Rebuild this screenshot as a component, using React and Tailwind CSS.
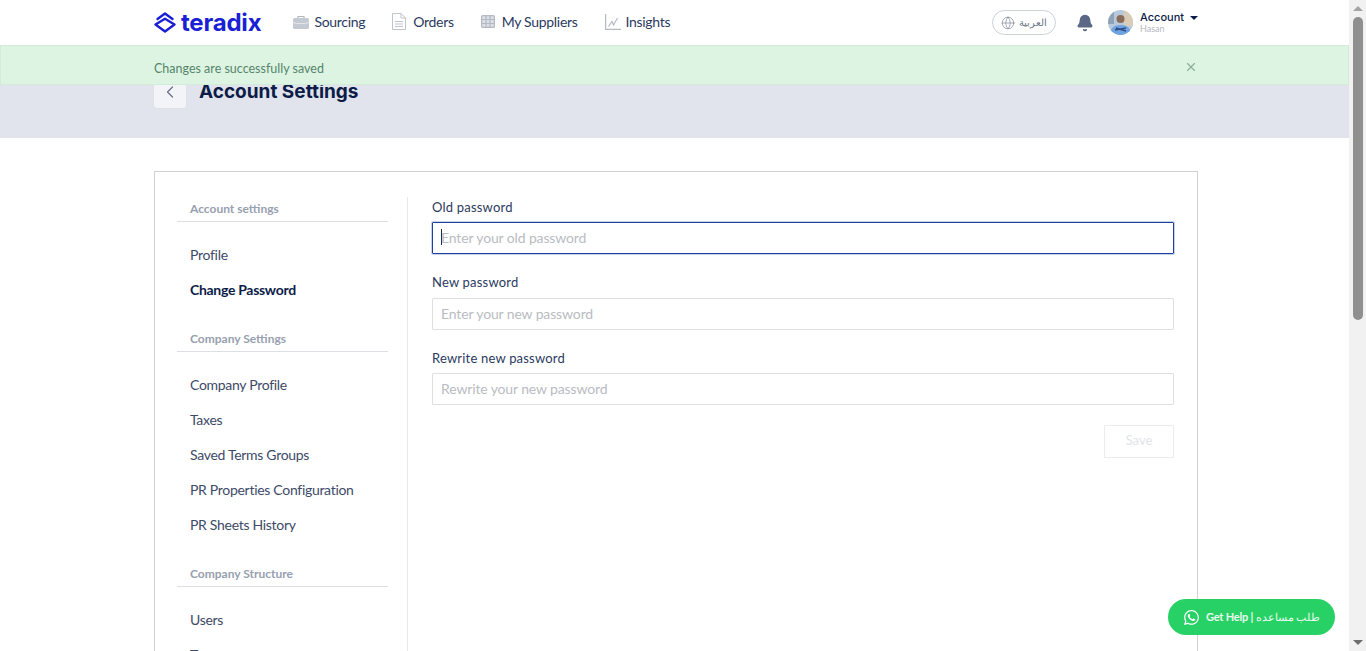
import { ChevronLeft, X, Globe, Bell } from 'lucide-react'
import { FaWhatsapp } from 'react-icons/fa'

const font = 'font-["Lato","Noto_Sans",sans-serif]'
const headFont = 'font-["Inter",sans-serif]'

function Logo() {
  return (
    <svg width="22" height="21" viewBox="0 0 22 21" fill="none" stroke="#1a1fd6" strokeWidth="2.400" strokeLinejoin="round" strokeLinecap="round">
      <path d="M3.500 7 L11 1.500 L18.500 7" />
      <path d="M1.500 12.500 L11 6.800 L20.500 12.500 L11 19.500 Z" />
    </svg>
  )
}

function BriefcaseIcon() {
  return (
    <svg width="16" height="14" viewBox="0 0 16 14">
      <path d="M5 3V1.500h6V3" fill="none" stroke="#b4b9c4" strokeWidth="1.200" />
      <rect x="0" y="3" width="16" height="11" rx="1.500" fill="#c5c9d2" />
      <path d="M0 7.500c4 1.600 12 1.600 16 0" fill="none" stroke="#e6e8ec" strokeWidth="1" />
    </svg>
  )
}

function DocIcon() {
  return (
    <svg width="14" height="17" viewBox="0 0 14 17" fill="none" stroke="#bfc3cd" strokeWidth="1">
      <path d="M.5.500h8.500l4.500 4.500v11.500h-13z" />
      <path d="M9 .500v4.500h4.500M3 8.500h8M3 11h8M3 13.500h8" />
    </svg>
  )
}

function GridIcon() {
  return (
    <svg width="14" height="13" viewBox="0 0 14 13" fill="none" stroke="#b4b9c4" strokeWidth="1.200">
      <rect x=".6" y=".6" width="12.800" height="11.800" rx="1" fill="#dcdfe5" />
      <path d="M.6 4.500h12.800M.6 8.500h12.800M5 .6v11.800M9 .6v11.800" />
    </svg>
  )
}

function ChartIcon() {
  return (
    <svg width="16" height="16" viewBox="0 0 16 16" fill="none" stroke="#b4b9c4" strokeWidth="1.200">
      <path d="M.6 0v15.400H16" />
      <path d="M3.500 12.500l3.500-5 1.500 3.500L12.500 4" />
    </svg>
  )
}

function Avatar() {
  return (
    <svg width="25" height="25" viewBox="0 0 25 25" className="rounded-full">
      <rect width="25" height="25" fill="#b9c9dc" />
      <rect x="16" width="9" height="16" fill="#d9cdb8" />
      <rect width="6" height="14" fill="#8fa3b8" />
      <path d="M2 25c0-7 4-10 10.500-10S23 18 23 25z" fill="#6fa3e0" />
      <circle cx="12.500" cy="9" r="4" fill="#8a6a58" />
      <path d="M7 20l11-2M8 18l10 3" stroke="#2f4f86" strokeWidth="1.500" />
    </svg>
  )
}

function NavItem({ icon, label, gap }) {
  return (
    <div className={`flex items-center ${gap} text-[14px] tracking-[-0.3px] text-[#2b3a5e]`}>
      {icon}
      <span>{label}</span>
    </div>
  )
}

function SideHeading({ children }) {
  return (
    <div className="ml-[-13px] w-[211px] border-b border-[#dcdfe3] pb-[4px] pl-[13px] text-[12px] leading-[16px] font-bold text-[#97a0af]">
      {children}
    </div>
  )
}

function SideLink({ children, active }) {
  return (
    <div className={`h-[35px] text-[14px] leading-[20px] tracking-[-0.3px] ${active ? 'font-bold text-[#0c1c48]' : 'text-[#3d4a68]'}`}>
      {children}
    </div>
  )
}

function Field({ label, placeholder, focused, mb, labelMb }) {
  return (
    <div className={mb}>
      <div className={`${labelMb} text-[13px] leading-[16px] tracking-[0.2px] text-[#2b3a5e]`}>{label}</div>
      <div className={`flex h-[32px] items-center rounded-[1px] border px-[8px] pb-[2px] text-[14px] tracking-[-0.13px] text-[#b9bcc3] ${focused ? 'border-[#1d3f9e] shadow-[0_0_0_1px_#c6d2ee]' : 'border-[#dee0e4]'}`}>
        {focused && <span className="mr-[-1px] h-[16px] w-px bg-[#1b2a4a]" />}
        {placeholder}
      </div>
    </div>
  )
}

export default function App() {
  return (
    <div className={`relative flex h-[651px] overflow-hidden bg-white ${font}`}>
      <div className="relative min-w-0 flex-1">
        <header className="flex h-[45px] items-center pr-[151px] pl-[154px]">
          <div className={`flex items-center gap-[5px] ${headFont}`}>
            <Logo />
            <span className="text-[24px] leading-none font-bold tracking-[-0.2px] text-[#1a1fd6]">teradix</span>
          </div>
          <div className="mb-[2px] ml-[32px] flex items-center gap-[27px]">
            <NavItem icon={<BriefcaseIcon />} label="Sourcing" gap="gap-[5px]" />
            <NavItem icon={<DocIcon />} label="Orders" gap="gap-[7px]" />
            <NavItem icon={<GridIcon />} label="My Suppliers" gap="gap-[7px]" />
            <NavItem icon={<ChartIcon />} label="Insights" gap="gap-[5px]" />
          </div>
          <div className="ml-auto flex items-center">
            <div className="flex h-[25px] w-[64px] items-center justify-center gap-[4px] rounded-full border border-[#ccd0d8] text-[10px] text-[#6a7385]">
              <Globe size={14} strokeWidth={1} className="text-[#6a7385]" />
              <span>العربية</span>
            </div>
            <Bell size={18} fill="#5a6785" stroke="#5a6785" className="ml-[20px]" />
            <div className="ml-[14px]"><Avatar /></div>
            <div className="ml-[7px] w-[58px] leading-none">
              <div className={`flex items-center text-[11px] font-medium text-[#0c1c48] ${headFont}`}>
                Account
                <span className="ml-[6px] h-0 w-0 border-x-[4px] border-t-[4px] border-x-transparent border-t-[#0c1c48]" />
              </div>
              <div className="mt-[1px] text-[9px] text-[#b4b8c2]">Hasan</div>
            </div>
          </div>
        </header>

        <div className="h-[93px] bg-[#e1e4ec] pl-[154px]">
          <div className="flex items-start gap-[13px] pt-[30px]">
            <div className="flex h-[33px] w-[32px] items-center justify-center rounded-[2px] bg-[#f3f4f7] shadow-[0_0_1px_#c9ccd4]">
              <ChevronLeft size={20} strokeWidth={1.500} className="text-[#69728a]" />
            </div>
            <h1 className={`mt-[1px] text-[19px] leading-[32px] font-bold text-[#0c1c48] ${headFont}`}>Account Settings</h1>
          </div>
        </div>

        <div className="absolute top-[45px] right-0 left-0 flex h-[40px] items-center justify-between border border-[#d3ecd9] bg-[#ddf4e3] pt-[4px] pr-[150px] pl-[153px] text-[12.500px] text-[#56856a]">
          <span className="mt-[4px]">Changes are successfully saved</span>
          <X size={14} strokeWidth={2} className="text-[#8fae9b]" />
        </div>

        <div className="mx-[154px] mt-[33px] flex h-[600px] w-[1044px] border border-[#cfd1d5] pt-[25px] pl-[35px]">
          <aside className="w-[217px] shrink-0 pt-[4px]">
            <SideHeading>Account settings</SideHeading>
            <div className="mt-[23px]">
              <SideLink>Profile</SideLink>
              <SideLink active>Change Password</SideLink>
            </div>
            <div className="mt-[16px]"><SideHeading>Company Settings</SideHeading></div>
            <div className="mt-[23px]">
              <SideLink>Company Profile</SideLink>
              <SideLink>Taxes</SideLink>
              <SideLink>Saved Terms Groups</SideLink>
              <SideLink>PR Properties Configuration</SideLink>
              <SideLink>PR Sheets History</SideLink>
            </div>
            <div className="mt-[16px]"><SideHeading>Company Structure</SideHeading></div>
            <div className="mt-[23px]">
              <SideLink>Users</SideLink>
              <SideLink>Teams</SideLink>
            </div>
          </aside>
          <div className="w-[767px] border-l border-[#e8e9ec] pt-[2px] pl-[24px]">
            <Field label="Old password" placeholder="Enter your old password" focused mb="mb-[20px]" labelMb="mb-[7px]" />
            <Field label="New password" placeholder="Enter your new password" mb="mb-[20px]" labelMb="mb-[8px]" />
            <Field label="Rewrite new password" placeholder="Rewrite your new password" labelMb="mb-[7px]" />
            <div className="mt-[20px] flex justify-end">
              <div className="flex h-[33px] w-[70px] items-center justify-center border border-[#ebecee] pb-[2px] text-[13px] text-[#e2e4e8]">Save</div>
            </div>
          </div>
        </div>
      </div>

      <div className="flex w-[17px] shrink-0 flex-col items-center bg-[#f1f1f1]">
        <span className="mt-[6px] h-0 w-0 border-x-[5px] border-b-[5px] border-x-transparent border-b-[#a3a3a3]" />
        <div className="mt-[6px] h-[303px] w-[10px] rounded-full bg-[#8f8f8f]" />
        <span className="mt-auto mb-[6px] h-0 w-0 border-x-[5px] border-t-[5px] border-x-transparent border-t-[#6e6e6e]" />
      </div>

      <div className="absolute top-[599px] left-[1168px] flex h-[36px] w-[167px] items-center gap-[6px] rounded-[18px] bg-[#28d165] pl-[15px] text-[11px] font-bold tracking-[-0.2px] text-[#e8fbef]">
        <FaWhatsapp size={17} className="text-white" />
        <span>Get Help | <span className="text-[10.500px] font-normal tracking-normal">طلب مساعده</span></span>
      </div>
    </div>
  )
}
